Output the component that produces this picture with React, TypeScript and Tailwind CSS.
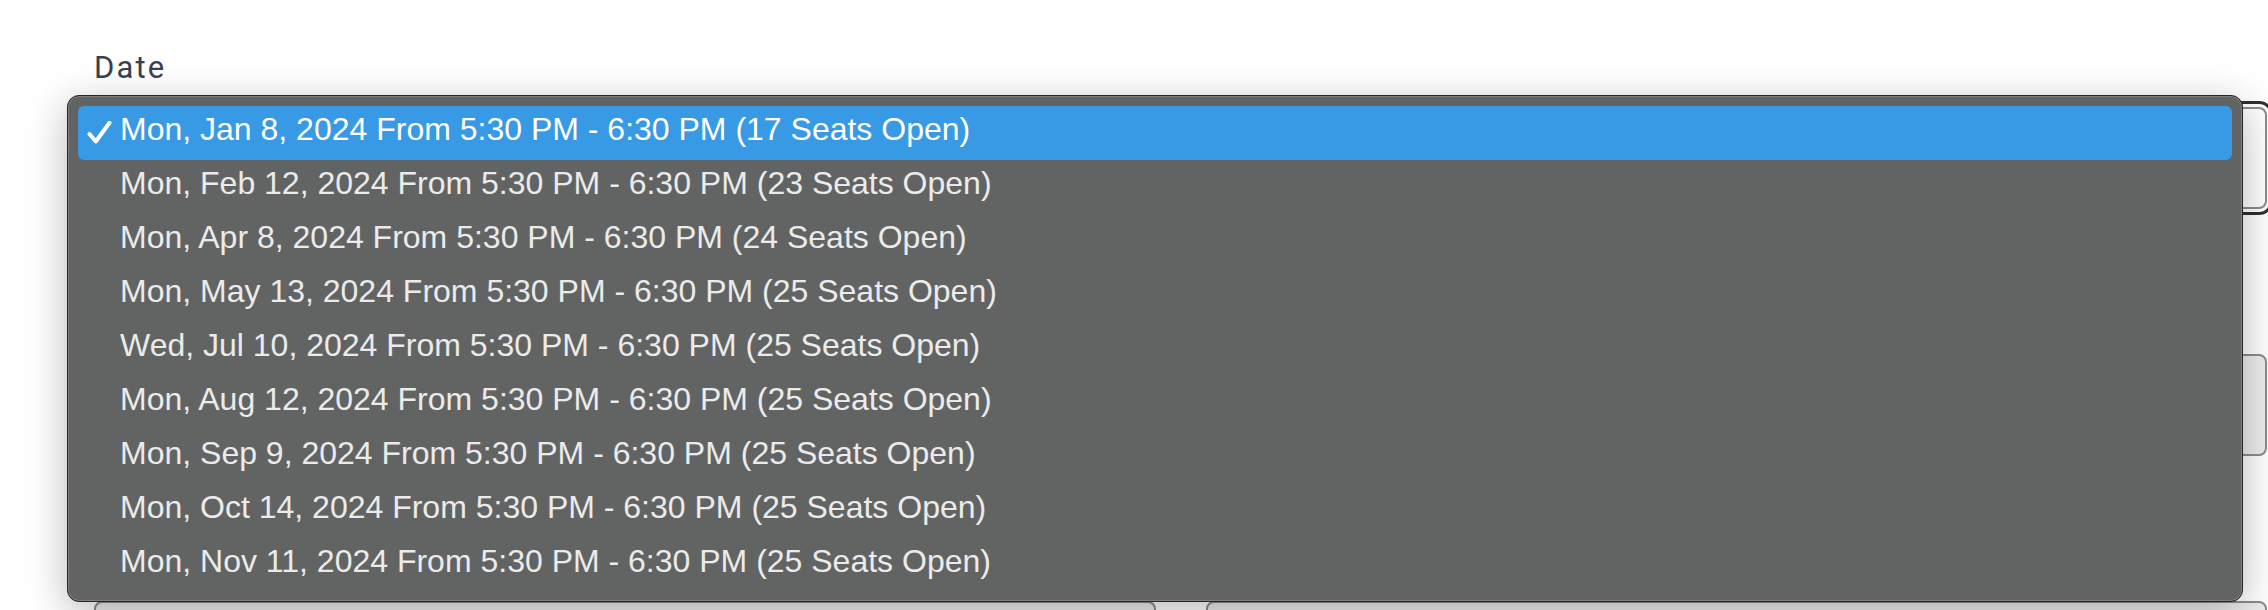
import React from "react";

const sessions = [
  "Mon, Jan 8, 2024 From 5:30 PM - 6:30 PM (17 Seats Open)",
  "Mon, Feb 12, 2024 From 5:30 PM - 6:30 PM (23 Seats Open)",
  "Mon, Apr 8, 2024 From 5:30 PM - 6:30 PM (24 Seats Open)",
  "Mon, May 13, 2024 From 5:30 PM - 6:30 PM (25 Seats Open)",
  "Wed, Jul 10, 2024 From 5:30 PM - 6:30 PM (25 Seats Open)",
  "Mon, Aug 12, 2024 From 5:30 PM - 6:30 PM (25 Seats Open)",
  "Mon, Sep 9, 2024 From 5:30 PM - 6:30 PM (25 Seats Open)",
  "Mon, Oct 14, 2024 From 5:30 PM - 6:30 PM (25 Seats Open)",
  "Mon, Nov 11, 2024 From 5:30 PM - 6:30 PM (25 Seats Open)",
];

// inputs that sit under the open menu, only their edges show
function Field() {
  return (
    <div className="flex flex-col">
      <div className="h-[40px]" />
      <div className="mt-[19px] h-[102px] rounded-[8px] border-2 border-[#8c8c8c] bg-[#ededed]" />
    </div>
  );
}

function Check() {
  return (
    <svg width="25" height="23" viewBox="0 0 25 23" fill="none">
      <path
        d="M2.5 13 L8.8 20.5 L22.5 1.8"
        stroke="#ffffff"
        strokeWidth="4"
        strokeLinecap="round"
        strokeLinejoin="round"
      />
    </svg>
  );
}

export default function App() {
  const selected = 0;

  return (
    <div
      className="relative h-[610px] w-full overflow-hidden bg-white"
      style={{ fontFamily: "Roboto, 'Noto Sans', sans-serif" }}
    >
      <form className="flex flex-col pl-[94px] pr-[1px] pt-[48px]">
        <div className="flex flex-col">
          <label className="h-[40px] text-[31px] leading-[40px] tracking-[0.07em] text-[#374151]">
            Date
          </label>
          <div className="mt-[19px] h-[102px] rounded-[8px] border-2 border-[#8c8c8c] bg-white outline-[3px] outline-offset-[3px] outline-[#2f2f2f] outline-solid" />
        </div>
        <div className="mt-[86px] grid grid-cols-2 gap-x-[50px] gap-y-[86px]">
          <Field />
          <Field />
          <Field />
          <Field />
        </div>
      </form>

      {/* native select menu, open */}
      <div
        className="absolute left-[67px] top-[95px] w-[2176px] rounded-[12px] border border-[#262626] bg-[#626463] px-[10px] pb-[9px] pt-[10px] shadow-[inset_0_0_0_1px_#7e7f7e,0_10px_40px_rgba(0,0,0,0.28)]"
        style={{ fontFamily: "'Liberation Sans', Arial, sans-serif" }}
      >
        {sessions.map((s, i) => (
          <div
            key={s}
            className={
              i === selected
                ? "flex h-[54px] items-start rounded-[6px] bg-[#3899e5] text-white"
                : "flex h-[54px] items-start rounded-[6px] text-[#ebebeb]"
            }
          >
            <div className="w-[42px] pl-[9px] pt-[15px]">
              {i === selected && <Check />}
            </div>
            <span className="whitespace-nowrap text-[32px] leading-[46px]">
              {s}
            </span>
          </div>
        ))}
      </div>
    </div>
  );
}
